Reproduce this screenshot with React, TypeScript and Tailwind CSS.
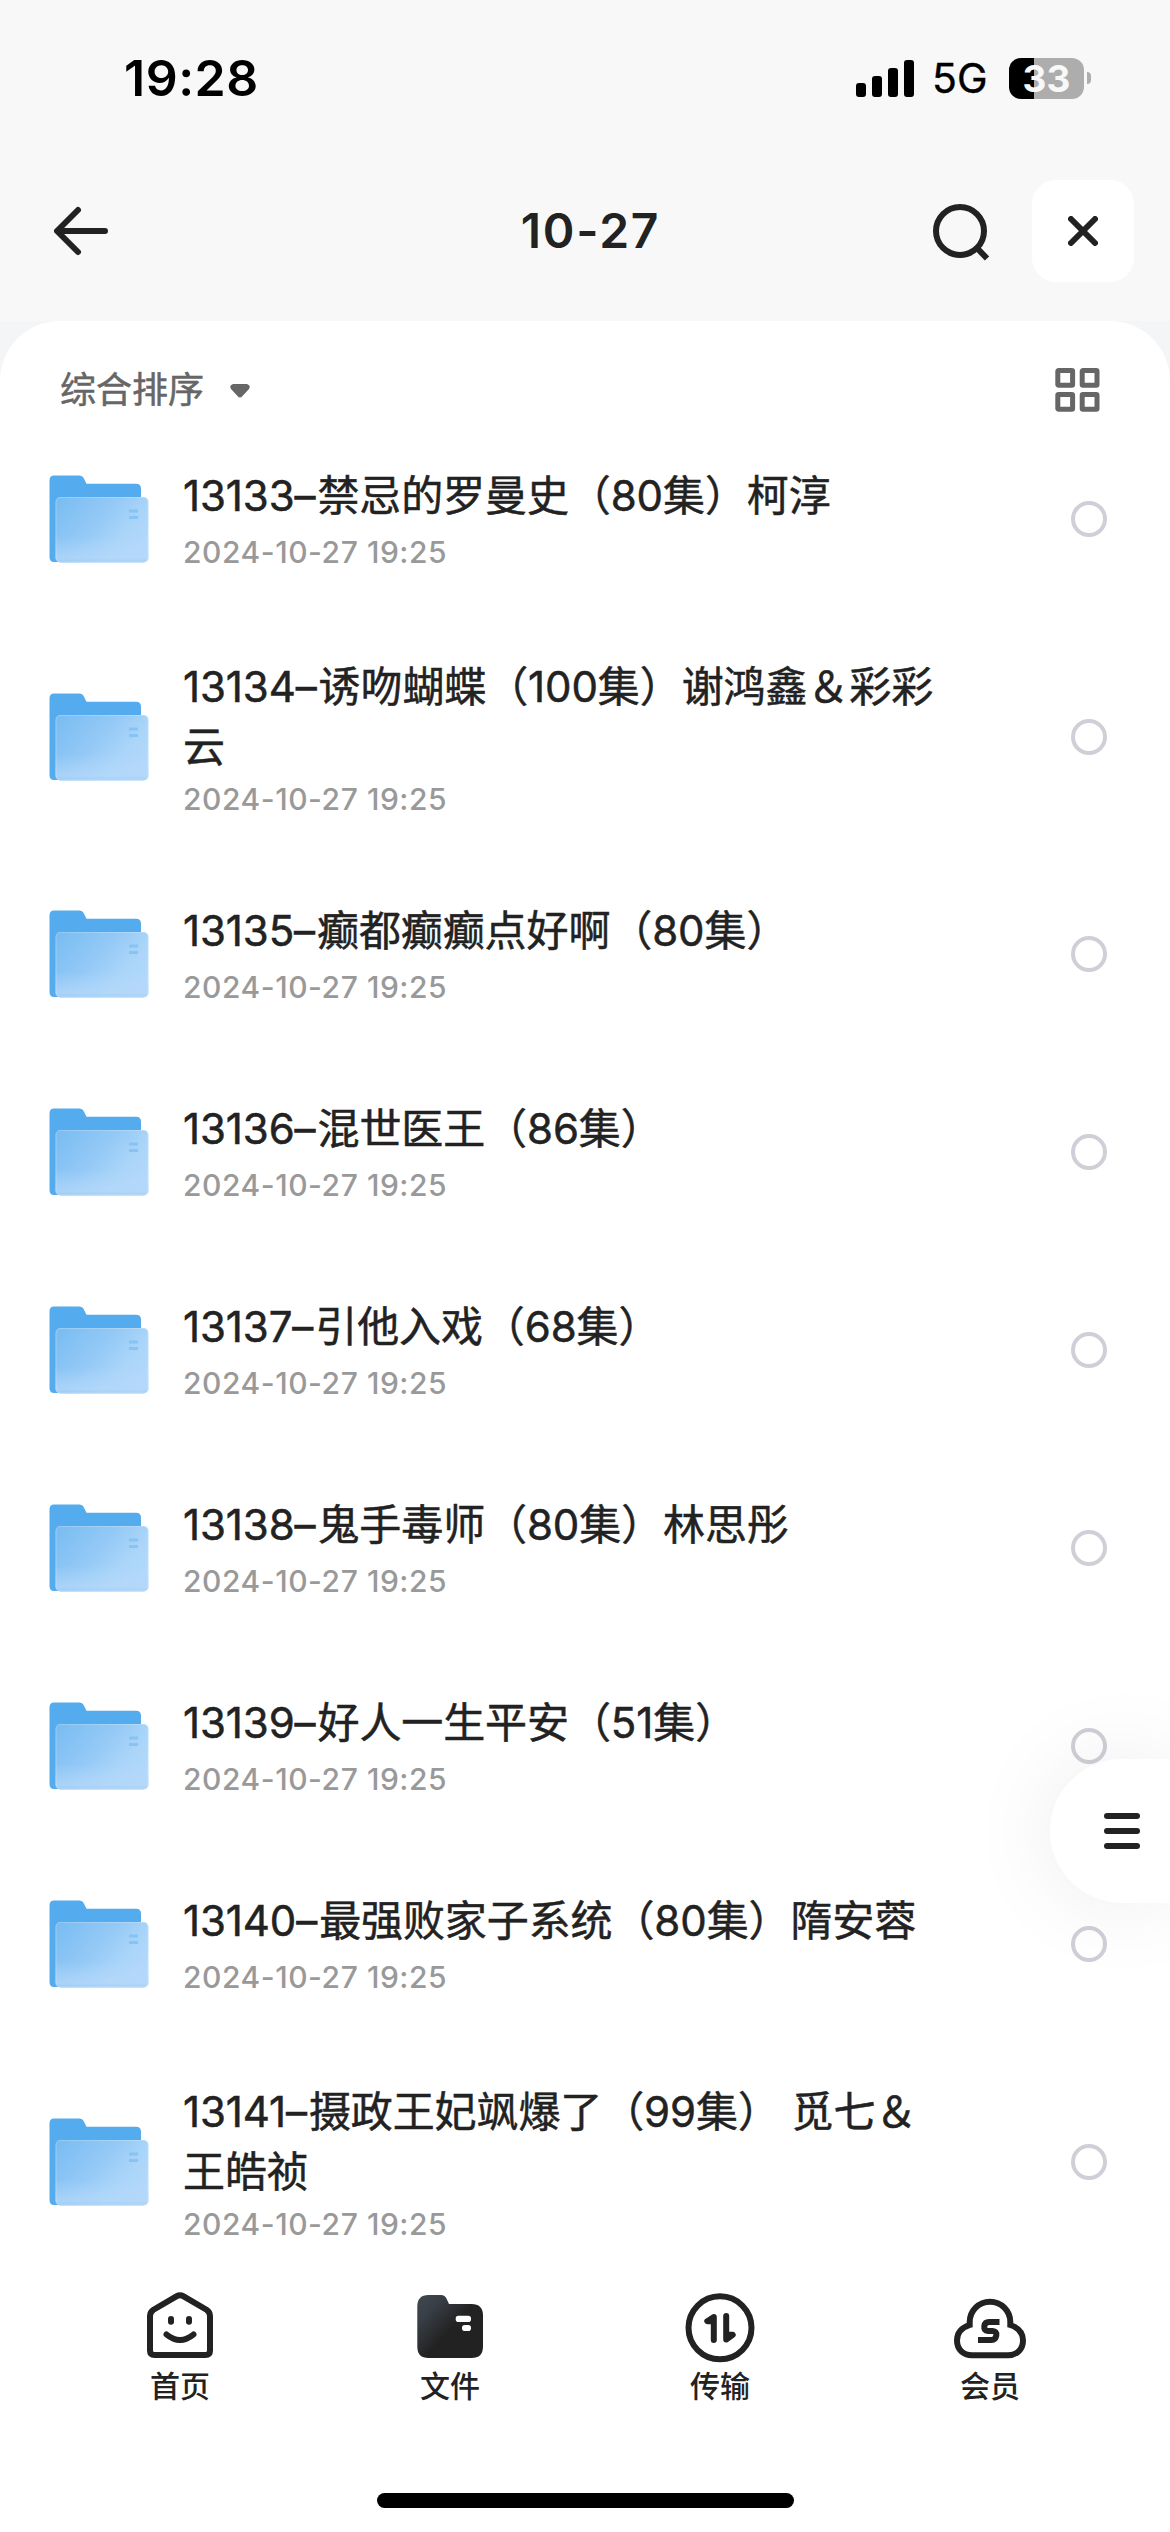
import React from "react";

type FileItem = { lines: [string, string][] };

const FILES: FileItem[] = [
  { lines: [["13133", "禁忌的罗曼史（80集）柯淳"]] },
  { lines: [["13134", "诱吻蝴蝶（100集）谢鸿鑫＆彩彩"], ["", "云"]] },
  { lines: [["13135", "癫都癫癫点好啊（80集）"]] },
  { lines: [["13136", "混世医王（86集）"]] },
  { lines: [["13137", "引他入戏（68集）"]] },
  { lines: [["13138", "鬼手毒师（80集）林思彤"]] },
  { lines: [["13139", "好人一生平安（51集）"]] },
  { lines: [["13140", "最强败家子系统（80集）隋安蓉"]] },
  { lines: [["13141", "摄政王妃飒爆了（99集） 觅七＆"], ["", "王皓祯"]] },
];

function StatusBar() {
  return (
    <div className="flex h-[156px] items-center justify-between pl-[124px] pr-[79px] text-black">
      <div className="text-[50px] font-semibold leading-[60px] tracking-[0.5px]">19:28</div>
      <div className="flex items-center">
        <div className="flex h-[37px] items-end gap-[6px]">
          <span className="h-[14px] w-[10px] rounded-[3px] bg-black" />
          <span className="h-[21px] w-[10px] rounded-[3px] bg-black" />
          <span className="h-[29px] w-[10px] rounded-[3px] bg-black" />
          <span className="h-[37px] w-[10px] rounded-[3px] bg-black" />
        </div>
        <div className="ml-[18px] w-[58px] text-[41px] leading-[50px] [-webkit-text-stroke:0.4px]">5G</div>
        <div className="ml-[19px] flex h-[41px] w-[75px] items-center justify-center rounded-[12px] bg-[linear-gradient(90deg,#000_25px,#adadad_25px)] text-[37px] font-bold leading-[41px] text-[#f8f8f8]">
          33
        </div>
        <span className="ml-[3px] h-[12px] w-[4px] rounded-r-full bg-[#adadad]" />
      </div>
    </div>
  );
}

function Header() {
  return (
    <div className="grid h-[150px] grid-cols-[1fr_auto_1fr] items-center pl-[54px] pr-[36px] text-[#222]">
      <svg className="h-[54px] w-[54px]" viewBox="0 0 54 54" fill="none" stroke="currentColor" strokeWidth="6" strokeLinecap="round" strokeLinejoin="round">
        <path d="M24 6 3 27l21 21M4 27h47" />
      </svg>
      <div className="mr-[7px] text-[48px] font-semibold leading-[60px] tracking-[1.8px]">10-27</div>
      <div className="flex items-center justify-end">
        <svg className="h-[60px] w-[60px]" viewBox="0 0 60 60" fill="none" stroke="currentColor" strokeWidth="6">
          <circle cx="30" cy="30" r="24" />
          <path d="m46 46 11 11.5" />
        </svg>
        <div className="ml-[42px] flex h-[102px] w-[102px] items-center justify-center rounded-[24px] bg-white">
          <svg className="h-[30px] w-[30px]" viewBox="0 0 30 30" fill="none" stroke="currentColor" strokeWidth="6" strokeLinecap="round">
            <path d="m3 3 24 24M27 3 3 27" />
          </svg>
        </div>
      </div>
    </div>
  );
}

function Toolbar() {
  return (
    <div className="flex h-[138px] shrink-0 items-center pl-[60px] pr-[70px] text-[#666]">
      <div className="text-[36px] leading-[48px] [-webkit-text-stroke:0.5px]">综合排序</div>
      <svg className="ml-[26px] mt-[2px] h-[14px] w-[20px]" viewBox="0 0 20 14" fill="currentColor">
        <path d="M3 0h14q4.200 1.500 2 5l-6.500 7q-2.500 3-5 0L1 5Q-1.200 1.500 3 0Z" />
      </svg>
      <svg className="ml-auto h-[44px] w-[45px]" viewBox="0 0 45 44" fill="none" stroke="currentColor" strokeWidth="5">
        <rect x="2.800" y="2.500" width="14.800" height="14.800" rx="0.800" />
        <rect x="27.200" y="2.500" width="14.800" height="14.800" rx="0.800" />
        <rect x="2.800" y="26.500" width="14.800" height="14.800" rx="0.800" />
        <rect x="27.200" y="26.500" width="14.800" height="14.800" rx="0.800" />
      </svg>
    </div>
  );
}

function FolderIcon() {
  return (
    <svg className="h-[88px] w-[100px] shrink-0" viewBox="0 0 100 88">
      <path d="M5 0.500H30q3.500 0 5 3.200L37.500 8.700H87q5 0 5 5V60H12v27H5q-4.500 0-4.500-5V5.500q0-5 4.500-5Z" fill="#54abee" />
      <rect x="6.500" y="22" width="93" height="65.500" rx="5" fill="url(#folderFront)" />
      <rect x="6.500" y="22" width="93" height="65.500" rx="5" fill="url(#folderGlow)" />
      <rect x="7" y="22.500" width="92" height="64.500" rx="4.500" fill="none" stroke="#fff" strokeOpacity="0.220" strokeWidth="1.200" />
      <path d="M80 36h9M80 42.500h9" stroke="#88c3f5" strokeWidth="3" />
    </svg>
  );
}

function FileRow({ item }: { item: FileItem }) {
  const two = item.lines.length > 1;
  return (
    <div className={"flex shrink-0 items-center pl-[49px] pr-[63px] " + (two ? "h-[237px]" : "h-[198px]")}>
      <FolderIcon />
      <div className={"ml-[34px] flex-1 " + (two ? "pt-[1px]" : "pb-[2px]")}>
        {item.lines.map(([num, rest], i) => (
          <div key={i} className="whitespace-nowrap text-[42px] leading-[60px] tracking-[-0.1px] text-[#222] [-webkit-text-stroke:0.5px]">
            {num && <span className="mr-[2px]">{num}–</span>}
            {rest}
          </div>
        ))}
        <div className={"text-[30px] font-medium leading-[36px] tracking-[0.55px] text-[#999] " + (two ? "mt-[4px]" : "mt-[8px]")}>2024-10-27 19:25</div>
      </div>
      <span className="h-[36px] w-[36px] rounded-full border-[4px] border-[#cfcfd7]" />
    </div>
  );
}

function HomeIcon() {
  return (
    <svg className="h-[84px] w-[84px]" viewBox="0 0 84 84" fill="none" stroke="#222" strokeWidth="6" strokeLinecap="round">
      <path d="M12 30q0-4 3.500-6.300L38.800 10.200q3.200-1.900 6.400 0l23.300 13.500Q72 26 72 30v34.500q0 4.500-4.500 4.500h-51q-4.500 0-4.500-4.500Z" />
      <path d="M33 33v2.800M51 33v2.800M28.500 48.500Q42 59.500 55.500 48.500" />
    </svg>
  );
}

function FilesIcon() {
  return (
    <svg className="h-[84px] w-[84px]" viewBox="0 0 84 84">
      <path d="M20.500 9H33q4 0 5.700 4l2.300 5h22.500Q75 18 75 29.500V60.500Q75 72 63.500 72h-43Q9.300 72 9.300 60.500v-40Q9.300 9 20.500 9Z" fill="url(#tabFolder)" />
      <rect x="47.700" y="29.800" width="15.300" height="6.200" rx="2.800" fill="#fff" />
      <rect x="54" y="39" width="9" height="6" rx="2.800" fill="#fff" />
    </svg>
  );
}

function TransferIcon() {
  return (
    <svg className="h-[84px] w-[84px]" viewBox="0 0 84 84" fill="none" stroke="#222" strokeWidth="6" strokeLinecap="round" strokeLinejoin="round">
      <circle cx="42" cy="41.800" r="31.500" />
      <path d="M35.800 54V31l-6.500 4.200h6.500M48.200 30v23.500l6.500-4.700h-6.500" />
    </svg>
  );
}

function CloudIcon() {
  return (
    <svg className="h-[84px] w-[84px]" viewBox="0 0 84 84" fill="none" stroke="#222" strokeWidth="6">
      <path d="M24 69.300C15 69.300 9 63 9 54.500c0-7 4.500-12.800 12.700-15.500v-3a20.300 20.300 0 0 1 40.600 0v3C70.500 41.700 75 47.500 75 54.500c0 8.500-6 14.800-15 14.800Z" />
      <path d="M51.500 36H41q-4 0-4.700 4-.6 4.800 3.700 5h4.500q4.500.3 3.800 4.500-.8 4.500-4.800 4.500h-13.500" />
    </svg>
  );
}

const TABS = [
  { label: "首页", Icon: HomeIcon },
  { label: "文件", Icon: FilesIcon },
  { label: "传输", Icon: TransferIcon },
  { label: "会员", Icon: CloudIcon },
];

function TabBar() {
  return (
    <div className="flex h-[252px] shrink-0 flex-col items-center bg-white">
      <div className="flex w-full px-[45px] pt-[6px]">
        {TABS.map(({ label, Icon }) => (
          <div key={label} className="flex flex-1 flex-col items-center">
            <Icon />
            <div className="mt-[-4px] text-[30px] font-medium leading-[40px] text-[#222]">{label}</div>
          </div>
        ))}
      </div>
      <div className="mb-[24px] mt-auto h-[15px] w-[417px] rounded-full bg-black" />
    </div>
  );
}

function Gradients() {
  return (
    <svg className="absolute h-0 w-0" aria-hidden="true">
      <defs>
        <linearGradient id="folderFront" x1="0" y1="0.100" x2="1" y2="0.700">
          <stop offset="0" stopColor="#7abdf2" />
          <stop offset="0.450" stopColor="#94c9f6" />
          <stop offset="0.750" stopColor="#aad5f9" />
          <stop offset="1" stopColor="#b3d8fa" />
        </linearGradient>
        <linearGradient id="folderGlow" x1="0" y1="0" x2="0" y2="1">
          <stop offset="0.600" stopColor="#b5d8fa" stopOpacity="0" />
          <stop offset="0.930" stopColor="#b5d8fa" stopOpacity="0.700" />
          <stop offset="1" stopColor="#9fcdf5" stopOpacity="0.700" />
        </linearGradient>
        <linearGradient id="tabFolder" x1="0.050" y1="0.150" x2="0.500" y2="0.550">
          <stop offset="0" stopColor="#3d444c" />
          <stop offset="0.300" stopColor="#383e45" />
          <stop offset="1" stopColor="#222" />
        </linearGradient>
      </defs>
    </svg>
  );
}

export default function App() {
  return (
    <div className="relative flex h-[2532px] w-[1170px] flex-col overflow-hidden bg-[#f8f8f8] font-['Inter','Noto_Sans_CJK_SC',sans-serif]">
      <Gradients />
      <StatusBar />
      <Header />
      <div className="h-[15px] shrink-0" />
      <div className="flex flex-1 flex-col bg-[#f4f5f7]">
        <div className="flex flex-1 flex-col rounded-t-[60px] bg-white">
          <Toolbar />
          <div className="mt-[-39px] flex flex-col">
            {FILES.map((item) => (
              <FileRow key={item.lines[0][0]} item={item} />
            ))}
          </div>
          <TabBar />
        </div>
      </div>
      <div className="absolute right-0 top-[1759px] flex h-[144px] w-[120px] items-center rounded-l-full bg-white pl-[54px] shadow-[0_0_90px_rgba(0,0,0,0.08)]">
        <div className="flex flex-col gap-[9px]">
          <span className="h-[6px] w-[36px] rounded-full bg-[#222]" />
          <span className="h-[6px] w-[36px] rounded-full bg-[#222]" />
          <span className="h-[6px] w-[36px] rounded-full bg-[#222]" />
        </div>
      </div>
    </div>
  );
}
